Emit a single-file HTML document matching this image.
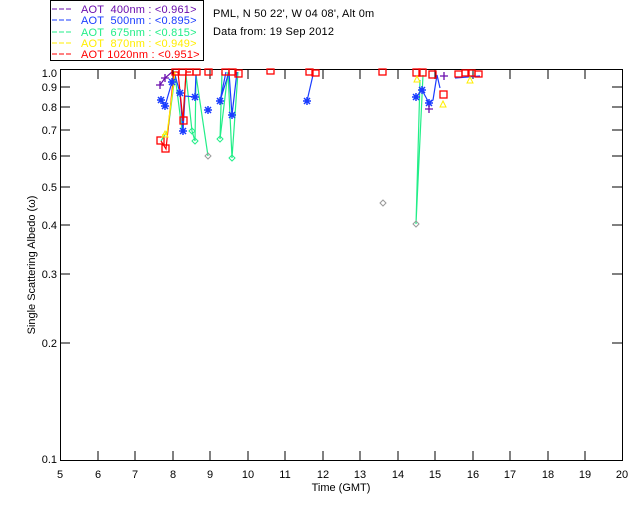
<!DOCTYPE html>
<html><head><meta charset="utf-8"><style>
html,body{margin:0;padding:0;background:#fff;width:640px;height:512px;overflow:hidden}
svg{display:block}
text{font-family:"Liberation Sans","DejaVu Sans",sans-serif;font-size:11px;white-space:pre}
</style></head><body>
<svg width="640" height="512" viewBox="0 0 640 512" xmlns="http://www.w3.org/2000/svg">
<rect x="50.5" y="0.5" width="153" height="60" fill="#fff" stroke="#000"/>
<g font-size="10.5" letter-spacing="0.2" xml:space="preserve">
<line x1="52" y1="9" x2="73" y2="9" stroke="#6a0dad" stroke-dasharray="5,2"/>
<text x="81" y="13" fill="#6a0dad">AOT  400nm : &lt;0.961&gt;</text>
<line x1="52" y1="20" x2="73" y2="20" stroke="#1a3cff" stroke-dasharray="5,2"/>
<text x="81" y="24" fill="#1a3cff">AOT  500nm : &lt;0.895&gt;</text>
<line x1="52" y1="32" x2="73" y2="32" stroke="#22ee88" stroke-dasharray="5,2"/>
<text x="81" y="36" fill="#22ee88">AOT  675nm : &lt;0.815&gt;</text>
<line x1="52" y1="43" x2="73" y2="43" stroke="#ffee00" stroke-dasharray="5,2"/>
<text x="81" y="47" fill="#ffee00">AOT  870nm : &lt;0.949&gt;</text>
<line x1="52" y1="54" x2="73" y2="54" stroke="#ff0000" stroke-dasharray="5,2"/>
<text x="81" y="58" fill="#ff0000">AOT 1020nm : &lt;0.951&gt;</text>
</g>
<text x="213" y="17" letter-spacing="0.2">PML, N 50 22', W 04 08', Alt 0m</text>
<text x="213" y="35" letter-spacing="0.2">Data from: 19 Sep 2012</text>
<rect x="60.5" y="69.5" width="562" height="391" fill="none" stroke="#000"/>
<g stroke="#000">
<line x1="98" y1="461" x2="98" y2="451"/><line x1="135" y1="461" x2="135" y2="451"/><line x1="173" y1="461" x2="173" y2="451"/><line x1="210" y1="461" x2="210" y2="451"/><line x1="248" y1="461" x2="248" y2="451"/><line x1="285" y1="461" x2="285" y2="451"/><line x1="323" y1="461" x2="323" y2="451"/><line x1="360" y1="461" x2="360" y2="451"/><line x1="398" y1="461" x2="398" y2="451"/><line x1="435" y1="461" x2="435" y2="451"/><line x1="473" y1="461" x2="473" y2="451"/><line x1="510" y1="461" x2="510" y2="451"/><line x1="548" y1="461" x2="548" y2="451"/><line x1="585" y1="461" x2="585" y2="451"/>
<line x1="98" y1="69" x2="98" y2="79"/><line x1="135" y1="69" x2="135" y2="79"/><line x1="173" y1="69" x2="173" y2="79"/><line x1="210" y1="69" x2="210" y2="79"/><line x1="248" y1="69" x2="248" y2="79"/><line x1="285" y1="69" x2="285" y2="79"/><line x1="323" y1="69" x2="323" y2="79"/><line x1="360" y1="69" x2="360" y2="79"/><line x1="398" y1="69" x2="398" y2="79"/><line x1="435" y1="69" x2="435" y2="79"/><line x1="473" y1="69" x2="473" y2="79"/><line x1="510" y1="69" x2="510" y2="79"/><line x1="548" y1="69" x2="548" y2="79"/><line x1="585" y1="69" x2="585" y2="79"/>
<line x1="60" y1="87" x2="70" y2="87"/><line x1="60" y1="107" x2="70" y2="107"/><line x1="60" y1="130" x2="70" y2="130"/><line x1="60" y1="156" x2="70" y2="156"/><line x1="60" y1="187" x2="70" y2="187"/><line x1="60" y1="225" x2="70" y2="225"/><line x1="60" y1="274" x2="70" y2="274"/><line x1="60" y1="343" x2="70" y2="343"/>
<line x1="622" y1="87" x2="612" y2="87"/><line x1="622" y1="107" x2="612" y2="107"/><line x1="622" y1="130" x2="612" y2="130"/><line x1="622" y1="156" x2="612" y2="156"/><line x1="622" y1="187" x2="612" y2="187"/><line x1="622" y1="225" x2="612" y2="225"/><line x1="622" y1="274" x2="612" y2="274"/><line x1="622" y1="343" x2="612" y2="343"/>
</g>
<g font-size="10.5" text-anchor="end">
<text x="57" y="77">1.0</text><text x="57" y="91">0.9</text><text x="57" y="111">0.8</text><text x="57" y="134">0.7</text><text x="57" y="160">0.6</text><text x="57" y="191">0.5</text><text x="57" y="229">0.4</text><text x="57" y="278">0.3</text><text x="57" y="347">0.2</text><text x="57" y="463">0.1</text>
</g>
<g font-size="10.5" text-anchor="middle">
<text x="60" y="478">5</text><text x="98" y="478">6</text><text x="135" y="478">7</text><text x="173" y="478">8</text><text x="210" y="478">9</text><text x="248" y="478">10</text><text x="285" y="478">11</text><text x="323" y="478">12</text><text x="360" y="478">13</text><text x="398" y="478">14</text><text x="435" y="478">15</text><text x="473" y="478">16</text><text x="510" y="478">17</text><text x="548" y="478">18</text><text x="585" y="478">19</text><text x="622" y="478">20</text>
<text x="341" y="491">Time (GMT)</text>
</g>
<text transform="translate(35,265) rotate(-90)" text-anchor="middle" font-size="10">Single Scattering Albedo (ω)</text>
<g fill="none" stroke-width="1.2">
<polyline stroke="#22ee88" points="161,141 168,130 175,75 182,130 186,75 192,131 195,141 196,75 208,156"/>
<polyline stroke="#22ee88" points="222,72 220,139 228,72 232,158 238,72"/>
<polyline stroke="#22ee88" points="423,75 416,224 420,80"/>
<polyline stroke="#1a3cff" points="161,100 165,106 172,82 175,75 180,93 183,131 185,96 195,97 196,75"/>
<polyline stroke="#1a3cff" points="226,72 220,101 229,72 232,115 237,72"/>
<polyline stroke="#1a3cff" points="307,101 313,75"/>
<polyline stroke="#1a3cff" points="416,97 422,90 429,103 433,100 437,75 440,88"/>
<polyline stroke="#ff0000" points="161,141 166,149 174,72 178,72 183,121 186,72 191,72"/>
<polyline stroke="#ffee00" points="162,135 167,134 175,72"/>
<polyline stroke="#6a0dad" points="160,85 165,78 172,72"/>
<polyline stroke="#1a3cff" points="455,78 480,76"/>
</g>
<g fill="none" stroke="#999">
<path d="M208,153 l3,3 -3,3 -3,-3z"/><path d="M383,200 l3,3 -3,3 -3,-3z"/><path d="M416,221 l3,3 -3,3 -3,-3z"/>
</g>
<g fill="none" stroke="#22ee88">
<path d="M195,138 l3,3 -3,3 -3,-3z"/><path d="M192,128 l3,3 -3,3 -3,-3z"/><path d="M220,136 l3,3 -3,3 -3,-3z"/><path d="M232,155 l3,3 -3,3 -3,-3z"/>
</g>
<g stroke="#1a3cff" stroke-width="1.5">
<path d="M161,96v8M157,100h8M158,97l6,6M164,97l-6,6"/>
<path d="M165,102v8M161,106h8M162,103l6,6M168,103l-6,6"/>
<path d="M172,78v8M168,82h8M169,79l6,6M175,79l-6,6"/>
<path d="M180,89v8M176,93h8M177,90l6,6M183,90l-6,6"/>
<path d="M183,127v8M179,131h8M180,128l6,6M186,128l-6,6"/>
<path d="M195,93v8M191,97h8M192,94l6,6M198,94l-6,6"/>
<path d="M208,106v8M204,110h8M205,107l6,6M211,107l-6,6"/>
<path d="M220,97v8M216,101h8M217,98l6,6M223,98l-6,6"/>
<path d="M232,111v8M228,115h8M229,112l6,6M235,112l-6,6"/>
<path d="M307,97v8M303,101h8M304,98l6,6M310,98l-6,6"/>
<path d="M416,93v8M412,97h8M413,94l6,6M419,94l-6,6"/>
<path d="M422,86v8M418,90h8M419,87l6,6M425,87l-6,6"/>
<path d="M429,99v8M425,103h8M426,100l6,6M432,100l-6,6"/>
</g>
<g stroke="#6a0dad" stroke-width="1.3">
<path d="M160,81v8M156,85h8M165,74v8M161,78h8M429,105v8M425,109h8M444,72v8M440,76h8"/>
</g>
<g fill="none" stroke="#ff0000" stroke-width="1.3">
<rect x="157" y="137" width="7" height="7"/><rect x="162" y="145" width="7" height="7"/><rect x="180" y="117" width="7" height="7"/>
<rect x="172" y="69" width="7" height="6"/><rect x="179" y="69" width="7" height="6"/><rect x="186" y="69" width="7" height="6"/><rect x="193" y="69" width="7" height="6"/><rect x="205" y="69" width="7" height="6"/><rect x="222" y="69" width="7" height="6"/><rect x="229" y="69" width="7" height="6"/><rect x="235" y="70" width="7" height="7"/><rect x="267" y="69" width="7" height="5"/><rect x="306" y="69" width="7" height="6"/><rect x="312" y="70" width="7" height="6"/><rect x="379" y="69" width="7" height="6"/><rect x="413" y="69" width="7" height="7"/><rect x="419" y="69" width="7" height="7"/><rect x="429" y="71" width="7" height="7"/><rect x="440" y="91" width="7" height="7"/><rect x="455" y="71" width="7" height="6"/><rect x="462" y="70" width="7" height="6"/><rect x="468" y="70" width="7" height="6"/><rect x="475" y="71" width="7" height="6"/>
</g>
<g fill="none" stroke="#ffee00">
<path d="M165,131l3,6h-6z"/><path d="M443,101l3,6h-6z"/><path d="M417,76l3,6h-6z"/><path d="M470,77l3,6h-6z"/>
</g>
</svg>
</body></html>
